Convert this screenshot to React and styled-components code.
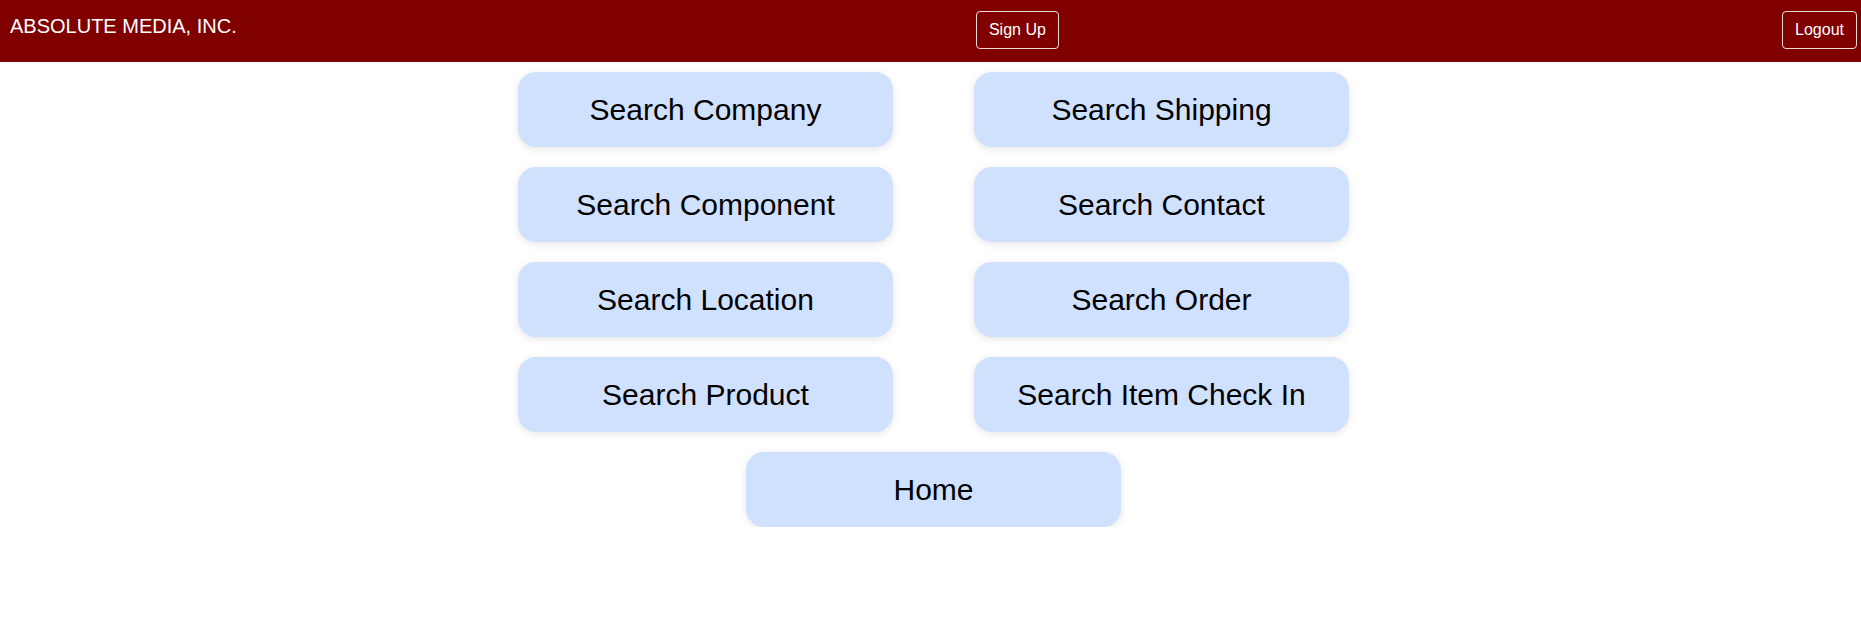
import React from 'react'
import styled, { createGlobalStyle } from 'styled-components'

const GlobalStyle = createGlobalStyle`
  body {
    margin: 0;
    font-family: "Liberation Sans", Arial, sans-serif;
    background: #fff;
  }
`

const NavBar = styled.nav`
  display: flex;
  justify-content: space-between;
  align-items: flex-start;
  height: 62px;
  box-sizing: border-box;
  padding: 11px 4px 0 10px;
  background: #800000;
`

const Brand = styled.span`
  margin-right: 16px;
  font-size: 20px;
  line-height: 30px;
  color: #fff;
`

const NavButton = styled.button`
  height: 38px;
  padding: 6px 12px;
  font-family: inherit;
  font-size: 16px;
  line-height: 24px;
  color: #fff;
  background: transparent;
  border: 1px solid rgba(255, 255, 255, 0.85);
  border-radius: 4px;
  cursor: pointer;
`

const Grid = styled.div`
  display: grid;
  grid-template-columns: repeat(2, 375px);
  justify-content: center;
  column-gap: 81px;
  row-gap: 20px;
  padding: 10px 0 0 6px;
`

const MenuButton = styled.button`
  grid-column: ${(p) => (p.wide ? '1 / -1' : 'auto')};
  justify-self: center;
  width: 375px;
  height: 75px;
  font-family: inherit;
  font-size: 30px;
  color: #000;
  background: #d0e1fd;
  border: none;
  border-radius: 18px;
  box-shadow: 0 2px 8px rgba(0, 0, 0, 0.1);
  cursor: pointer;
`

const items = [
  'Search Company',
  'Search Shipping',
  'Search Component',
  'Search Contact',
  'Search Location',
  'Search Order',
  'Search Product',
  'Search Item Check In',
]

const App = () => {
  return (
    <>
      <GlobalStyle />
      <NavBar>
        <Brand>ABSOLUTE MEDIA, INC.</Brand>
        <NavButton>Sign Up</NavButton>
        <NavButton>Logout</NavButton>
      </NavBar>
      <Grid>
        {items.map((label) => (
          <MenuButton key={label}>{label}</MenuButton>
        ))}
        <MenuButton wide>Home</MenuButton>
      </Grid>
    </>
  )
}

export default App
